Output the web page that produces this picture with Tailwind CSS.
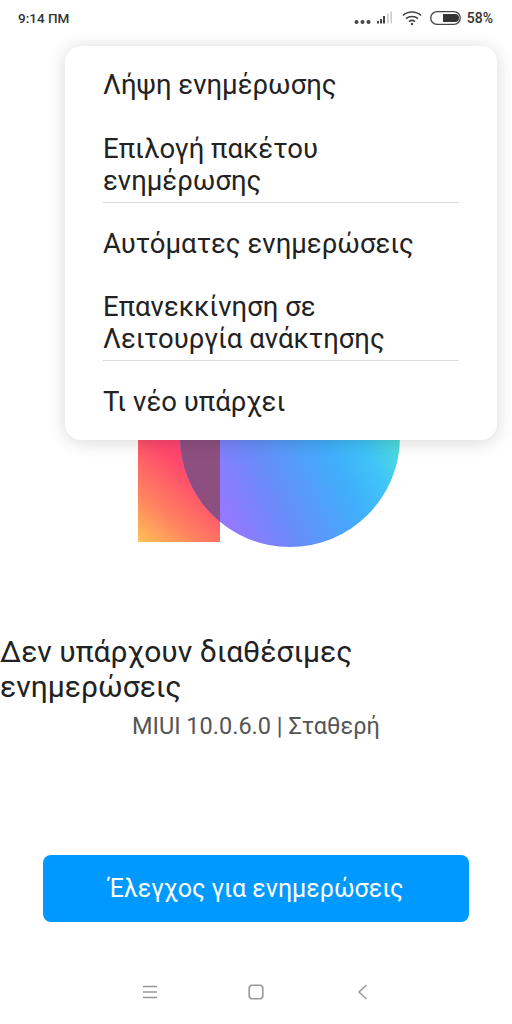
<!doctype html>
<html>
  <head>
    <meta charset="utf-8" />
    <title>Updater</title>
    <script src="https://cdn.jsdelivr.net/npm/@tailwindcss/browser@4"></script>
  </head>
  <body>
    <div class="relative w-[512px] h-[1024px] bg-white overflow-hidden flex flex-col font-['Roboto',sans-serif] text-[#222]">
      <!-- status bar -->
      <div class="h-9 flex items-center justify-between pl-[18px] pr-[19px] shrink-0">
        <span class="text-[13.5px] font-medium text-[#333]">9:14 ΠΜ</span>
        <div class="flex items-center text-[#333]">
          <svg width="40" height="14" viewBox="0 0 40 14" fill="#444">
            <circle cx="2.5" cy="11" r="2" /><circle cx="8.5" cy="11" r="2" /><circle cx="14.5" cy="11" r="2" />
            <rect x="23" y="10" width="2" height="2.5" /><rect x="26" y="8" width="2" height="4.5" /><rect x="29" y="5" width="2" height="7.5" />
            <rect x="33" y="2.5" width="1.5" height="10" fill="#ccc" /><rect x="36.5" y="0.5" width="1.5" height="12" fill="#ccc" />
          </svg>
          <svg class="ml-[8px]" width="20" height="16" viewBox="0 0 20 16" fill="none" stroke="#444" stroke-width="1.6">
            <path d="M1 5.5c5-4.6 13-4.6 18 0" /><path d="M4 8.7c3.4-3 8.6-3 12 0" /><path d="M7 11.6c1.8-1.5 4.2-1.5 6 0" />
            <circle cx="10" cy="14" r="1.2" fill="#444" stroke="none" />
          </svg>
          <svg class="ml-[8px]" width="31" height="14" viewBox="0 0 31 14">
            <rect x="0.7" y="0.7" width="29.6" height="12.6" rx="6.3" fill="none" stroke="#444" stroke-width="1.3" />
            <path d="M13 3h12a4 4 0 0 1 0 8H13z" fill="#333" />
          </svg>
          <span class="ml-[6px] text-[14px] font-medium">58%</span>
        </div>
      </div>

      <!-- logo -->
      <div class="relative h-[300px] shrink-0">
        <div class="absolute left-[138px] top-[180px] w-[82px] h-[326px] bg-[linear-gradient(40deg,#ffc157_0px,#ff8060_40px,#ff4a6c_85px,#ff3d70_130px)]"></div>
        <div class="absolute left-[180px] top-[291px] w-[220px] h-[220px] rounded-full overflow-hidden bg-[linear-gradient(65deg,#9478ff_19%,#6a8bf8_36%,#40aefb_60%,#3fc4f8_72%,#4fdcd8_83%)]">
          <div class="w-[40px] h-full bg-[#8d4f80]"></div>
        </div>
      </div>

      <!-- version info -->
      <div class="mt-[298px] text-[30px] leading-[35px] text-[#222] w-[400px]">Δεν υπάρχουν διαθέσιμες ενημερώσεις</div>
      <div class="mt-[7px] pl-[132px] text-[23.5px] leading-[30px] text-[#555]">MIUI 10.0.6.0 | Σταθερή</div>

      <button class="mx-[43px] mt-[114px] h-[67px] w-[426px] rounded-[8px] bg-[#0099ff] text-white text-[25px]">Έλεγχος για ενημερώσεις</button>

      <!-- nav bar -->
      <div class="mt-[54px] h-[32px] flex items-center">
        <svg class="ml-[142px]" width="16" height="16" viewBox="0 0 16 16" fill="none" stroke="#999" stroke-width="1.6"><path d="M1 2.5h14M1 8h14M1 13.5h14" /></svg>
        <svg class="ml-[90px]" width="16" height="16" viewBox="0 0 16 16" fill="none" stroke="#999" stroke-width="1.6"><rect x="1.2" y="1.2" width="13.6" height="13.6" rx="3" /></svg>
        <svg class="ml-[93px]" width="12" height="16" viewBox="0 0 12 16" fill="none" stroke="#999" stroke-width="1.5"><path d="M9.5 1 2 8l7.5 7" /></svg>
      </div>

      <!-- popup menu -->
      <div class="absolute left-[65px] top-[46px] w-[432px] h-[394px] bg-white rounded-[16px] shadow-[0_2px_18px_rgba(0,0,0,0.16)] px-[38px] text-[27.5px] leading-[32px] text-[#222]">
        <div class="h-[78px] flex items-center">Λήψη ενημέρωσης</div>
        <div class="h-[79px] pt-[3px] flex items-center border-b border-[#ddd]">Επιλογή πακέτου<br />ενημέρωσης</div>
        <div class="h-[80px] pt-[2px] flex items-center">Αυτόματες ενημερώσεις</div>
        <div class="h-[78px] pt-[3px] flex items-center border-b border-[#ddd]">Επανεκκίνηση σε<br />Λειτουργία ανάκτησης</div>
        <div class="h-[78px] pt-[3px] flex items-center">Τι νέο υπάρχει</div>
      </div>
    </div>
  </body>
</html>
